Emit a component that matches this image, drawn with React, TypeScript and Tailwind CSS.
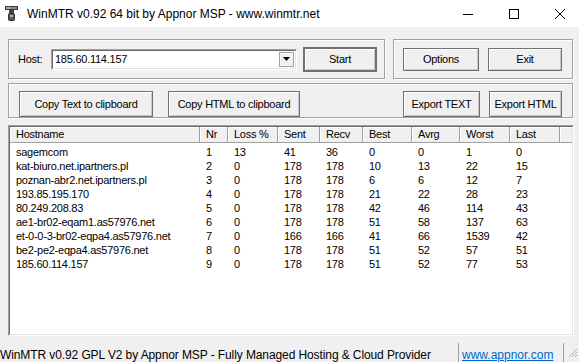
const rows = [
  ["sagemcom", "1", "13", "41", "36", "0", "0", "1", "0"],
  ["kat-biuro.net.ipartners.pl", "2", "0", "178", "178", "10", "13", "22", "15"],
  ["poznan-abr2.net.ipartners.pl", "3", "0", "178", "178", "6", "6", "12", "7"],
  ["193.85.195.170", "4", "0", "178", "178", "21", "22", "28", "23"],
  ["80.249.208.83", "5", "0", "178", "178", "42", "46", "114", "43"],
  ["ae1-br02-eqam1.as57976.net", "6", "0", "178", "178", "51", "58", "137", "63"],
  ["et-0-0-3-br02-eqpa4.as57976.net", "7", "0", "166", "166", "41", "66", "1539", "42"],
  ["be2-pe2-eqpa4.as57976.net", "8", "0", "178", "178", "51", "52", "57", "51"],
  ["185.60.114.157", "9", "0", "178", "178", "51", "52", "77", "53"],
];

const headers = ["Hostname", "Nr", "Loss %", "Sent", "Recv", "Best", "Avrg", "Worst", "Last"];

const cols = "grid grid-cols-[190px_28px_50px_42px_43px_49px_48px_50px_50px_1fr]";

const btn =
  "flex items-center justify-center bg-[#f0f0f0] border border-[#707070] shadow-[inset_1px_1px_0_#fff,inset_-1px_-1px_0_#c8c8c8] text-[11px] tracking-[-0.25px] text-black";

const group = "border border-[#a0a0a0] shadow-[inset_1px_1px_0_#fff,1px_1px_0_#fff]";

const AppIcon = () => (
  <svg width="13" height="16" viewBox="0 0 13 16">
    <rect x="0.5" y="0.5" width="12" height="3" fill="#8a8a8a" stroke="#3a3a3a" />
    <rect x="2" y="1.5" width="3" height="1" fill="#d8d8d8" />
    <rect x="4" y="4" width="5" height="3" fill="#3f3f3f" />
    <rect x="3.5" y="7.5" width="6" height="7" rx="1" fill="#5a5a5a" stroke="#2c2c2c" />
    <rect x="5" y="9" width="3" height="2" fill="#b0b0b0" />
  </svg>
);

export default function App() {
  return (
    <div className="w-[579px] h-[362px] overflow-hidden bg-[#f0f0f0] flex flex-col font-['Liberation_Sans',Arial,sans-serif] text-black select-none">
      {/* title bar */}
      <div className="h-[27px] shrink-0 bg-white flex items-center">
        <div className="ml-[5px] mt-[1px]">
          <AppIcon />
        </div>
        <span className="ml-[9px] text-[12px]">WinMTR v0.92 64 bit by Appnor MSP - www.winmtr.net</span>
        <div className="flex-1" />
        <div className="flex h-full -mr-[4px]">
          <div className="w-[46px] h-full flex items-center justify-center">
            <svg width="10" height="10" viewBox="0 0 10 10">
              <path d="M0 5.5h10" stroke="#000" strokeWidth="1" />
            </svg>
          </div>
          <div className="w-[46px] h-full flex items-center justify-center">
            <svg width="10" height="10" viewBox="0 0 10 10">
              <rect x="0.5" y="0.5" width="9" height="9" fill="none" stroke="#000" />
            </svg>
          </div>
          <div className="w-[46px] h-full flex items-center justify-center">
            <svg width="10" height="10" viewBox="0 0 10 10">
              <path d="M0 0L10 10M10 0L0 10" stroke="#000" strokeWidth="1" />
            </svg>
          </div>
        </div>
      </div>

      {/* host / start / options / exit */}
      <div className="mt-[12px] ml-[8px] flex gap-[8px]">
        <div className={`${group} w-[377px] h-[40px] flex items-center pl-[9px]`}>
          <span className="w-[33px] text-[11px] tracking-[-0.25px]">Host:</span>
          <div className="w-[246px] h-[21px] border border-t-[#a0a0a0] border-l-[#a0a0a0] border-r-white border-b-white">
            <div className="h-full bg-white border border-t-[#696969] border-l-[#696969] border-r-[#e3e3e3] border-b-[#e3e3e3] flex items-center pr-[1px]">
              <span className="flex-1 pl-[2px] text-[11px] tracking-[-0.25px]">185.60.114.157</span>
              <div className="w-[15px] h-[15px] bg-[#f0f0f0] border border-[#a0a0a0] shadow-[inset_1px_1px_0_#fff] flex items-center justify-center">
                <svg width="7" height="4" viewBox="0 0 7 4">
                  <path d="M0 0h7L3.5 4z" fill="#000" />
                </svg>
              </div>
            </div>
          </div>
          <button className={`${btn} ml-[6px] w-[74px] h-[25px] border-2 border-[#5f5f5f]`}>Start</button>
        </div>
        <div className={`${group} w-[180px] h-[40px] flex items-center pl-[9px] gap-[9px]`}>
          <button className={`${btn} w-[76px] h-[23px]`}>Options</button>
          <button className={`${btn} w-[74px] h-[23px]`}>Exit</button>
        </div>
      </div>

      {/* export buttons */}
      <div className={`${group} mt-[4px] ml-[8px] w-[565px] h-[37px] flex items-start pt-[7px] pl-[10px] pr-[10px]`}>
        <button className={`${btn} w-[134px] h-[26px]`}>Copy Text to clipboard</button>
        <button className={`${btn} ml-[15px] w-[132px] h-[26px]`}>Copy HTML to clipboard</button>
        <div className="flex-1" />
        <button className={`${btn} w-[77px] h-[26px]`}>Export TEXT</button>
        <button className={`${btn} ml-[9px] w-[73px] h-[26px]`}>Export HTML</button>
      </div>

      {/* list view */}
      <div className="mt-[7px] ml-[8px] w-[566px] h-[211px] shrink-0 border border-t-[#a0a0a0] border-l-[#a0a0a0] border-r-white border-b-white">
        <div className="h-full bg-white border border-t-[#696969] border-l-[#696969] border-r-[#e3e3e3] border-b-[#e3e3e3] overflow-hidden text-[11px] tracking-[-0.25px]">
          <div className={`${cols} h-[16px] bg-[#f0f0f0] border-b border-[#a0a0a0]`}>
            {headers.map((h) => (
              <div key={h} className="pl-[6px] leading-[15px] border-r border-[#a0a0a0] shadow-[inset_1px_1px_0_#fff]">
                {h}
              </div>
            ))}
            <div className="shadow-[inset_1px_1px_0_#fff]" />
          </div>
          <div className="pt-[2px]">
            {rows.map((r) => (
              <div key={r[0]} className={`${cols} h-[14px] leading-[14px]`}>
                {r.map((c, i) => (
                  <div key={i} className="pl-[6px] whitespace-nowrap">
                    {c}
                  </div>
                ))}
                <div />
              </div>
            ))}
          </div>
        </div>
      </div>

      {/* status bar */}
      <div className="mt-[7px] h-[24px] shrink-0 flex text-[12px]">
        <div className="w-[458px] flex items-center whitespace-nowrap tracking-[-0.1px]">
          WinMTR v0.92 GPL V2 by Appnor MSP - Fully Managed Hosting &amp; Cloud Provider
        </div>
        <div className="w-[106px] border-l border-r border-[#a0a0a0] flex items-center pl-[3px]">
          <span className="text-[#0066cc] underline">www.appnor.com</span>
        </div>
        <div className="flex-1 flex items-start justify-end pt-[5px] pr-[1px]">
          <svg width="10" height="10" viewBox="0 0 10 10">
            <path d="M9 1L1 9M9 4L4 9M9 7L7 9" stroke="#b0b0b0" strokeWidth="1" />
          </svg>
        </div>
      </div>
    </div>
  );
}
